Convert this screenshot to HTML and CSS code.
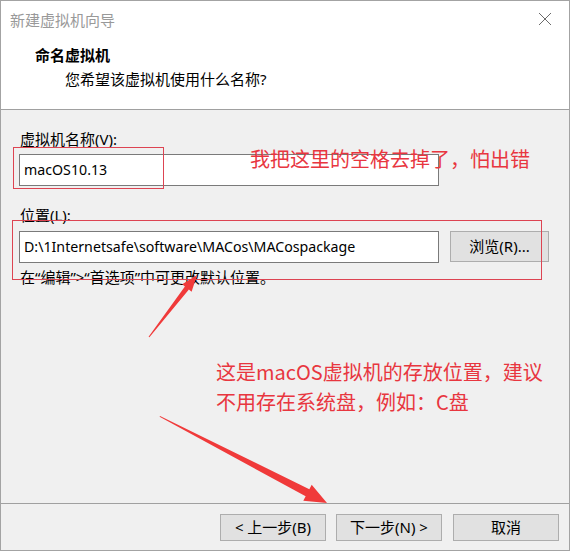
FILE: index.html
```html
<!DOCTYPE html>
<html lang="zh-CN">
<head>
<meta charset="utf-8">
<title>新建虚拟机向导</title>
<link rel="stylesheet" href="styles.css">
</head>
<body>
<div class="window">
  <div class="titlebar">
    <span class="title">新建虚拟机向导</span>
    <svg class="close" width="14" height="14" viewBox="0 0 14 14"><path d="M1 1 L13 13 M13 1 L1 13" stroke="#6b6b6b" stroke-width="1" fill="none"/></svg>
  </div>
  <div class="header">
    <div class="h-title">命名虚拟机</div>
    <div class="h-sub">您希望该虚拟机使用什么名称?</div>
  </div>
  <div class="content">
    <div class="label">虚拟机名称(V):</div>
    <div class="input">macOS10.13</div>
    <div class="label label2">位置(L):</div>
    <div class="row">
      <div class="input">D:\1Internetsafe\software\MACos\MACospackage</div>
      <div class="btn browse">浏览(R)...</div>
    </div>
    <div class="hint">在“编辑”&gt;“首选项”中可更改默认位置。</div>
  </div>
  <div class="footer">
    <div class="btn">&lt; 上一步(B)</div>
    <div class="btn">下一步(N) &gt;</div>
    <div class="btn cancel">取消</div>
  </div>

  <div class="mark mark1"></div>
  <div class="mark mark2"></div>
  <div class="note note1">我把这里的空格去掉了，怕出错</div>
  <div class="note note2">这是macOS虚拟机的存放位置，建议<br>不用存在系统盘，例如：C盘</div>
  <svg class="arrows" width="570" height="551" viewBox="0 0 570 551">
    <polygon fill="#f03a3a" points="148.6,336.7 184.9,286.5 182.2,284.3 197,275 191.6,291.7 188.9,289.5 149.4,337.3"/>
    <polygon fill="#f03a3a" points="160,416 309.35,489.25 311.7,484.8 327,503 303.3,500.8 305.65,496.35 159.6,416.8"/>
  </svg>
</div>
</body>
</html>
```
FILE: styles.css
```css
* { box-sizing: border-box; }
html, body { margin: 0; padding: 0; background: #fff; }
body {
  font-family: "Noto Sans", "Noto Sans CJK SC", sans-serif;
  font-size: 15px;
  color: #000;
}
.window {
  position: relative;
  width: 570px;
  height: 551px;
  border: 1px solid #a3a3a3;
  display: flex;
  flex-direction: column;
  background: #f0f0f0;
  overflow: hidden;
}
.titlebar {
  height: 36px;
  background: #fff;
  display: flex;
  align-items: center;
  justify-content: space-between;
  padding: 2px 17px 0 9px;
}
.title { color: #999; line-height: 20px; }
.close { display: block; margin-top: -2px; }
.header {
  height: 73px;
  background: #fff;
  border-bottom: 1px solid #a0a0a0;
  padding: 8px 0 0 34px;
}
.h-title { font-weight: 700; line-height: 20px; }
.h-sub { line-height: 20px; margin: 4px 0 0 30px; }
.content {
  flex: 1;
  padding: 19px 0 0 18px;
}
.label { line-height: 20px; margin-left: 1px; }
.label2 { margin-top: 19px; }
.input {
  width: 420px;
  height: 32px;
  margin-top: 5px;
  background: #fff;
  border: 1px solid #7a7a7a;
  padding-left: 4px;
  line-height: 30px;
  white-space: nowrap;
  font-size: 14.2px;
}
.row { display: flex; align-items: flex-start; margin-top: 1px; }
.btn {
  height: 27px;
  width: 106px;
  background: #e1e1e1;
  border: 1px solid #adadad;
  text-align: center;
  line-height: 25px;
}
.browse {
  width: 99px;
  height: 31px;
  line-height: 29px;
  margin: 5px 0 0 11px;
}
.hint { line-height: 20px; margin: 4px 0 0 1px; }
.footer {
  height: 47px;
  border-top: 1px solid #a0a0a0;
  display: flex;
  justify-content: flex-end;
  gap: 10px;
  padding: 10px 10px 0 0;
}
.cancel { margin-left: 1px; }
.mark {
  position: absolute;
  border: 1px solid #dd4452;
}
.mark1 { left: 12px; top: 146px; width: 151px; height: 42px; }
.mark2 { left: 11px; top: 219px; width: 530px; height: 60px; }
.note {
  position: absolute;
  color: #e8363f;
  font-family: "Noto Sans CJK SC", sans-serif;
  font-size: 20px;
  white-space: nowrap;
}
.note1 { left: 249px; top: 144px; line-height: 28px; }
.note2 { left: 215px; top: 356px; line-height: 30px; }
.arrows { position: absolute; left: -1px; top: -1px; }
```
